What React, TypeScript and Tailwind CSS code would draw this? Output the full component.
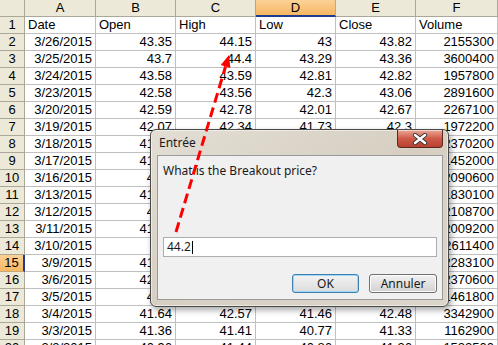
import React from "react";

const cols = ["A", "B", "C", "D", "E", "F"];
const widths = ["w-[71px]", "w-[80px]", "w-[80px]", "w-[80px]", "w-[80px]", "w-[82px]"];

const rows: string[][] = [
  ["Date", "Open", "High", "Low", "Close", "Volume"],
  ["3/26/2015", "43.35", "44.15", "43", "43.82", "2155300"],
  ["3/25/2015", "43.7", "44.4", "43.29", "43.36", "3600400"],
  ["3/24/2015", "43.58", "43.59", "42.81", "42.82", "1957800"],
  ["3/23/2015", "42.58", "43.56", "42.3", "43.06", "2891600"],
  ["3/20/2015", "42.59", "42.78", "42.01", "42.67", "2267100"],
  ["3/19/2015", "42.07", "42.34", "41.73", "42.3", "1972200"],
  ["3/18/2015", "41.96", "42.2", "41.52", "42.05", "2370200"],
  ["3/17/2015", "41.85", "42.13", "41.6", "41.95", "1452000"],
  ["3/16/2015", "41.5", "42.02", "41.3", "41.93", "2090600"],
  ["3/13/2015", "41.64", "41.9", "41.22", "41.47", "1830100"],
  ["3/12/2015", "41.3", "41.86", "41.13", "41.68", "2108700"],
  ["3/11/2015", "41.47", "41.6", "41.02", "41.21", "2009200"],
  ["3/10/2015", "", "41.7", "41.05", "41.31", "2611400"],
  ["3/9/2015", "41.45", "41.87", "41.2", "41.72", "2283100"],
  ["3/6/2015", "42.27", "42.42", "41.18", "41.37", "2370600"],
  ["3/5/2015", "42.2", "42.61", "42.02", "42.36", "1461800"],
  ["3/4/2015", "41.64", "42.57", "41.46", "42.48", "3342900"],
  ["3/3/2015", "41.36", "41.41", "40.77", "41.33", "1162900"],
  ["3/2/2015", "40.96", "41.44", "40.86", "41.36", "1532500"],
];

function Cell({ v, i, header }: { v: string; i: number; header: boolean }) {
  return (
    <div
      className={`${widths[i]} shrink-0 h-[17px] border-r border-b border-[#c0c0c0] px-[3px] flex items-center ${
        header ? "justify-start" : "justify-end"
      } whitespace-nowrap overflow-hidden`}
    >
      {v}
    </div>
  );
}

export default function App() {
  // arrow geometry
  const tip = { x: 229, y: 55 };
  const start = { x: 176, y: 232 };
  const dx = start.x - tip.x;
  const dy = start.y - tip.y;
  const len = Math.sqrt(dx * dx + dy * dy);
  const ux = dx / len;
  const uy = dy / len;
  const bx = tip.x + ux * 12;
  const by = tip.y + uy * 12;
  const px = -uy;
  const py = ux;
  const p1 = `${tip.x},${tip.y} ${bx + px * 5},${by + py * 5} ${bx - px * 5},${by - py * 5}`;

  return (
    <div className="relative w-[498px] h-[345px] overflow-hidden bg-white text-[13px] text-black" style={{ fontFamily: '"Liberation Sans", Arial, sans-serif' }}>
      {/* header row */}
      <div className="flex">
        <div className="w-[25px] shrink-0 h-[17px] bg-[#ece9d8] border-r border-b border-[#aca899]" />
        {cols.map((c, i) => (
          <div
            key={c}
            className={`${widths[i]} shrink-0 h-[17px] flex items-center justify-center border-r ${
              c === "D"
                ? "bg-gradient-to-b from-[#fbd196] to-[#f6b762] border-b-2 border-b-[#1e3c8c] border-r-[#c9a878]"
                : "bg-[#ece9d8] border-b border-[#aca899]"
            }`}
          >
            {c}
          </div>
        ))}
      </div>
      {rows.map((r, ri) => (
        <div key={ri} className="flex">
          <div
            className={`w-[25px] shrink-0 h-[17px] flex items-center justify-center border-b ${
              ri === 14
                ? "bg-gradient-to-b from-[#fbd196] to-[#f6b762] border-r-2 border-r-[#1e3c8c] border-b-[#c9a878]"
                : "bg-[#ece9d8] border-r border-[#aca899]"
            }`}
          >
            {ri + 1}
          </div>
          {r.map((v, i) => (
            <Cell key={i} v={v} i={i} header={ri === 0} />
          ))}
        </div>
      ))}

      {/* dialog */}
      <div
        className="absolute left-[150px] top-[129px] w-[299px] h-[178px] rounded-[6px] border border-[#4a4a4a] bg-gradient-to-br from-[#e3ded4] via-[#d6cfc2] to-[#dcd6ca] shadow-[0_0_0_1px_rgba(255,255,255,0.5)_inset,2px_3px_6px_rgba(0,0,0,0.35)] flex flex-col"
        style={{ fontFamily: '"Noto Sans", "Open Sans", sans-serif' }}
      >
        <div className="h-[25px] flex items-start justify-between">
          <div className="pl-[8px] pt-[4px] text-[12px] text-[#1a1a1a]">Entrée</div>
          <div className="mr-[5px] w-[46px] h-[18px] rounded-b-[4px] border border-t-0 border-[#5a2a22] bg-gradient-to-b from-[#e9a898] via-[#cf5a48] to-[#b8402e] flex items-center justify-center shadow-[inset_0_1px_0_rgba(255,255,255,0.5)]">
            <svg width="16" height="12" viewBox="0 0 16 12">
              <path d="M3 2 L13 10 M13 2 L3 10" stroke="#3a3a3a" strokeWidth="4.2" strokeLinecap="round" />
              <path d="M3 2 L13 10 M13 2 L3 10" stroke="#ffffff" strokeWidth="2.4" strokeLinecap="round" />
            </svg>
          </div>
        </div>
        <div className="ml-[6px] mr-[5px] mb-[6px] flex-1 bg-[#f0f0f0] border border-[#9a9a9a] flex flex-col px-[5px] text-[12px] text-[#1a1a1a]">
          <div className="pt-[7px] leading-[16px]">What is the Breakout price?</div>
          <div className="mt-[58px] h-[20px] bg-white border border-[#abadb3] flex items-center pl-[3px] leading-none">
            <span>44.2</span>
            <span className="ml-[1px] w-[1px] h-[13px] bg-black" />
          </div>
          <div className="mt-[17px] flex justify-end gap-[10px]">
            <div className="w-[67px] h-[19px] rounded-[3px] border border-[#3c7fb1] shadow-[inset_0_0_0_1px_#9fd7f5] bg-gradient-to-b from-[#f3f3f3] to-[#dcdcdc] flex items-center justify-center">
              OK
            </div>
            <div className="w-[68px] h-[19px] rounded-[3px] border border-[#707070] shadow-[inset_0_0_0_1px_#fcfcfc] bg-gradient-to-b from-[#f2f2f2] to-[#d2d2d2] flex items-center justify-center">
              Annuler
            </div>
          </div>
        </div>
      </div>

      {/* arrow */}
      <svg className="absolute inset-0 pointer-events-none" width="498" height="345">
        <line x1={start.x} y1={start.y} x2={bx} y2={by} stroke="#ff0000" strokeWidth="3" strokeDasharray="10 5" />
        <polygon points={p1} fill="#ff0000" />
      </svg>
    </div>
  );
}
